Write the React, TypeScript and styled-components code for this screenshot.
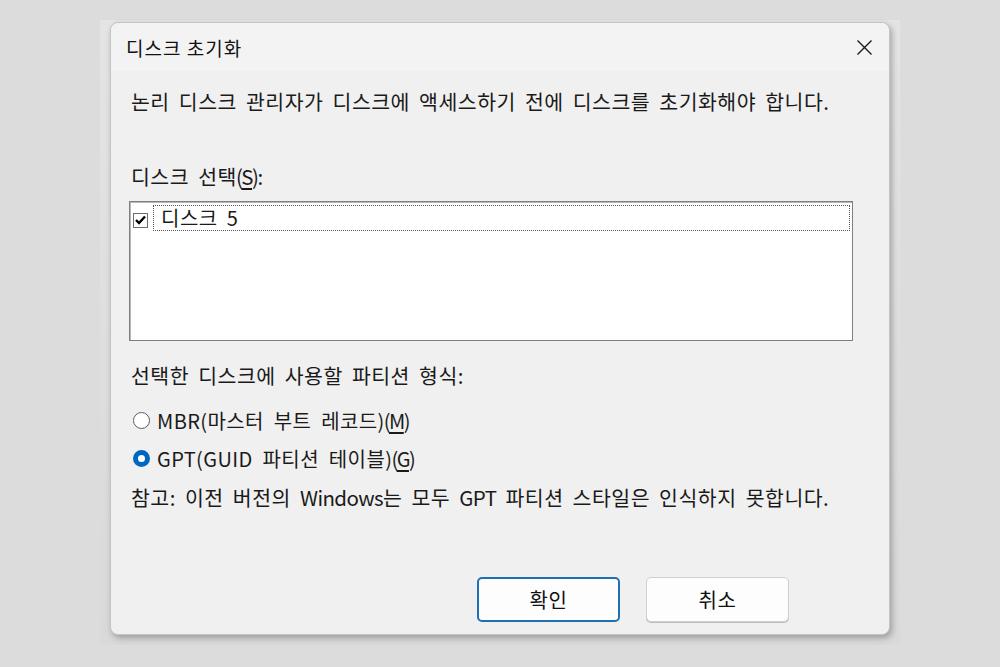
import React from 'react';
import styled, { createGlobalStyle } from 'styled-components';

const GlobalStyle = createGlobalStyle`
    html, body {
        margin: 0;
        padding: 0;
        background: #dcdcdc;
    }
    body {
        font-family: "Noto Sans CJK KR", "Noto Sans", sans-serif;
        color: #1a1a1a;
    }
`;

const Page = styled.div`
    width: 1000px;
    height: 667px;
    padding-top: 20px;
    box-sizing: border-box;
`;

const Frame = styled.div`
    margin-left: 100px;
    width: 800px;
    height: 625px;
    box-sizing: border-box;
    padding: 2px 10px 10px 10px;
    background: linear-gradient(180deg, #e4e4e4 0%, #d9d9d9 100%);
`;

const Dialog = styled.div`
    height: 613px;
    box-sizing: border-box;
    background: #f0f0f0;
    border: 1px solid #c4c4c4;
    border-radius: 8px;
    box-shadow: 2px 3px 6px rgba(0, 0, 0, 0.28);
    display: flex;
    flex-direction: column;
`;

const TitleBar = styled.div`
    height: 48px;
    display: flex;
    align-items: center;
    justify-content: space-between;
    padding: 0 15px 0 15px;
    background: #f3f3f3;
    border-radius: 8px 8px 0 0;
`;

const Title = styled.span`
    font-size: 19px;
    letter-spacing: 1px;
    color: #111;
`;

const CloseButton = styled.div`
    width: 20px;
    height: 20px;
    display: flex;
    align-items: center;
    justify-content: center;
`;

const Body = styled.div`
    flex: 1;
    display: flex;
    flex-direction: column;
    padding: 0 36px 0 20px;
`;

const Text = styled.div<{ $top: number }>`
    margin-top: ${p => p.$top}px;
    font-size: 20.5px;
    line-height: 26px;
    letter-spacing: 0.5px;
    word-spacing: 4px;
    white-space: nowrap;
`;

const Latin = styled.span`
    letter-spacing: -0.6px;
`;

const Key = styled.span`
    text-decoration: underline;
    text-underline-offset: 3px;
`;

const Paren = styled.span`
    letter-spacing: -1.5px;
    margin-left: -1px;
`;

const ListBox = styled.div`
    margin: 12px 0 0 -2px;
    height: 140px;
    box-sizing: border-box;
    background: #fff;
    border: 1px solid #7f7f7f;
    box-shadow: inset 1px 1px 0 #b8b8b8;
    padding: 3px 2px 0 3px;
`;

const ListItem = styled.div`
    display: flex;
    align-items: center;
    height: 26px;
`;

const CheckBox = styled.div`
    width: 13px;
    height: 13px;
    margin-top: 4px;
    border: 1px solid #6d6d6d;
    background: #fff;
    display: flex;
    align-items: center;
    justify-content: center;
    flex-shrink: 0;
`;

const FocusRect = styled.div`
    flex: 1;
    height: 26px;
    box-sizing: border-box;
    margin-left: 5px;
    border: 1px dotted #555;
    padding-left: 7px;
    font-size: 20px;
    line-height: 23px;
    letter-spacing: 0.5px;
    word-spacing: 4px;
`;

const RadioRow = styled.div<{ $top: number }>`
    display: flex;
    align-items: center;
    margin-top: ${p => p.$top}px;
    margin-left: 2px;
    height: 26px;
`;

const Radio = styled.div<{ $checked: boolean }>`
    width: 17px;
    height: 17px;
    box-sizing: border-box;
    border-radius: 50%;
    border: ${p => (p.$checked ? '5px solid #0067c0' : '1.5px solid #5c5c5c')};
    background: #fff;
    margin-right: 7px;
    flex-shrink: 0;
`;

const RadioLabel = styled.span`
    font-size: 20px;
    letter-spacing: 0.4px;
    word-spacing: 5px;
    white-space: nowrap;
`;

const ButtonRow = styled.div`
    margin-top: auto;
    margin-bottom: 12px;
    display: flex;
    justify-content: flex-end;
    gap: 26px;
    padding-right: 64px;
`;

const Button = styled.div<{ $primary?: boolean }>`
    width: 143px;
    height: 45px;
    box-sizing: border-box;
    border-radius: 5px;
    background: #fdfdfd;
    border: ${p => (p.$primary ? '2px solid #1f6fb5' : '1px solid #cfcfcf')};
    box-shadow: ${p => (p.$primary ? 'none' : '0 1px 0 #bdbdbd')};
    display: flex;
    align-items: center;
    justify-content: center;
    font-size: 20px;
    letter-spacing: 0.5px;
    color: #111;
`;

const CloseIcon = () => (
    <svg width="17" height="17" viewBox="0 0 17 17">
        <path d="M1.5 1.5 L15.5 15.5 M15.5 1.5 L1.5 15.5" stroke="#1a1a1a" strokeWidth="1.4" fill="none" />
    </svg>
);

const CheckMark = () => (
    <svg width="11" height="10" viewBox="0 0 11 10">
        <path d="M1 5 L4 8 L10 1.5" stroke="#000" strokeWidth="2.4" fill="none" />
    </svg>
);

export default function App() {
    return (
        <Page>
            <GlobalStyle />
            <Frame>
                <Dialog>
                    <TitleBar>
                        <Title>디스크 초기화</Title>
                        <CloseButton>
                            <CloseIcon />
                        </CloseButton>
                    </TitleBar>
                    <Body>
                        <Text $top={17}>논리 디스크 관리자가 디스크에 액세스하기 전에 디스크를 초기화해야 합니다.</Text>
                        <Text $top={49}>
                            디스크 선택<Paren>(<Key>S</Key>):</Paren>
                        </Text>
                        <ListBox>
                            <ListItem>
                                <CheckBox>
                                    <CheckMark />
                                </CheckBox>
                                <FocusRect>디스크 5</FocusRect>
                            </ListItem>
                        </ListBox>
                        <Text $top={21}>선택한 디스크에 사용할 파티션 형식:</Text>
                        <RadioRow $top={19}>
                            <Radio $checked={false} />
                            <RadioLabel>
                                MBR(마스터 부트 레코드)<Paren>(<Key>M</Key>)</Paren>
                            </RadioLabel>
                        </RadioRow>
                        <RadioRow $top={12}>
                            <Radio $checked={true} />
                            <RadioLabel>
                                GPT(GUID 파티션 테이블)<Paren>(<Key>G</Key>)</Paren>
                            </RadioLabel>
                        </RadioRow>
                        <Text $top={13}>
                            참고: 이전 버전의 <Latin>Windows</Latin>는 모두 <Latin>GPT</Latin> 파티션 스타일은 인식하지 못합니다.
                        </Text>
                        <ButtonRow>
                            <Button $primary>확인</Button>
                            <Button>취소</Button>
                        </ButtonRow>
                    </Body>
                </Dialog>
            </Frame>
        </Page>
    );
}
